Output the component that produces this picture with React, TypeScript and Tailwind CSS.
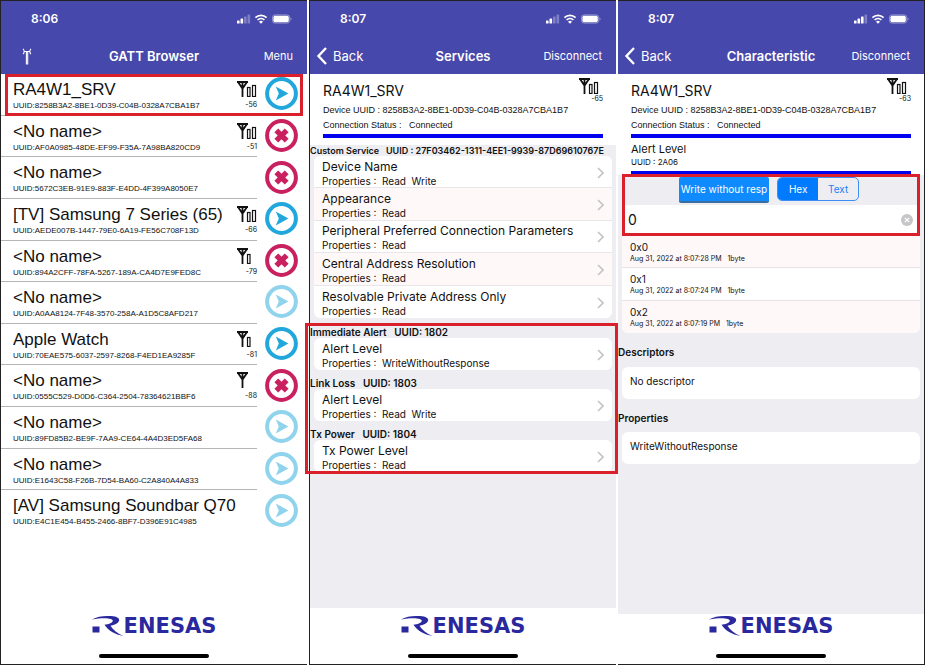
import type { ReactNode } from "react";

type Action = "connect" | "blocked" | "faded";

interface Device {
  name: string;
  uuid: string;
  rssi?: number;
  bars?: number;
  action: Action;
}

const devices: Device[] = [
  { name: "RA4W1_SRV", uuid: "8258B3A2-8BE1-0D39-C04B-0328A7CBA1B7", rssi: -56, bars: 2, action: "connect" },
  { name: "<No name>", uuid: "AF0A0985-48DE-EF99-F35A-7A98BA820CD9", rssi: -51, bars: 2, action: "blocked" },
  { name: "<No name>", uuid: "5672C3EB-91E9-883F-E4DD-4F399A8050E7", action: "blocked" },
  { name: "[TV] Samsung 7 Series (65)", uuid: "AEDE007B-1447-79E0-6A19-FE56C708F13D", rssi: -66, bars: 2, action: "connect" },
  { name: "<No name>", uuid: "894A2CFF-78FA-5267-189A-CA4D7E9FED8C", rssi: -79, bars: 1, action: "blocked" },
  { name: "<No name>", uuid: "A0AA8124-7F48-3570-258A-A1D5C8AFD217", action: "faded" },
  { name: "Apple Watch", uuid: "70EAE575-6037-2597-8268-F4ED1EA9285F", rssi: -81, bars: 1, action: "connect" },
  { name: "<No name>", uuid: "0555C529-D0D6-C364-2504-78364621BBF6", rssi: -88, bars: 0, action: "blocked" },
  { name: "<No name>", uuid: "89FD85B2-BE9F-7AA9-CE64-4A4D3ED5FA68", action: "faded" },
  { name: "<No name>", uuid: "E1643C58-F26B-7D54-BA60-C2A840A4A833", action: "faded" },
  { name: "[AV] Samsung Soundbar Q70", uuid: "E4C1E454-B455-2466-8BF7-D396E91C4985", action: "faded" },
];

const customService = [
  { name: "Device Name", properties: ["Read", "Write"] },
  { name: "Appearance", properties: ["Read"] },
  { name: "Peripheral Preferred Connection Parameters", properties: ["Read"] },
  { name: "Central Address Resolution", properties: ["Read"] },
  { name: "Resolvable Private Address Only", properties: ["Read"] },
];

const alertServices = [
  { service: "Immediate Alert", uuid: "1802", name: "Alert Level", properties: ["WriteWithoutResponse"] },
  { service: "Link Loss", uuid: "1803", name: "Alert Level", properties: ["Read", "Write"] },
  { service: "Tx Power", uuid: "1804", name: "Tx Power Level", properties: ["Read"] },
];

const writes = [
  { value: "0x0", time: "Aug 31, 2022 at 8:07:28 PM" },
  { value: "0x1", time: "Aug 31, 2022 at 8:07:24 PM" },
  { value: "0x2", time: "Aug 31, 2022 at 8:07:19 PM" },
];

function StatusIcons({ strength }: { strength: number }) {
  return (
    <svg width="56" height="12" viewBox="0 0 56 12" fill="#fff" aria-hidden="true">
      {[3, 5, 7, 9].map((h, i) => (
        <rect key={h} x={i * 3.5} y={10.5 - h} width="2.6" height={h} rx="0.6" opacity={i < strength ? 1 : 0.3} />
      ))}
      <g fill="none" stroke="#fff" strokeWidth="1.7">
        <path d="M18.4 4.7a8 8 0 0 1 11.2 0" />
        <path d="M20.6 7a4.9 4.9 0 0 1 6.8 0" />
      </g>
      <path d="M24 10.8l-2-2.1a2.9 2.9 0 0 1 4 0z" />
      <rect x="35.5" y="1.9" width="17.2" height="8.2" rx="2.5" fill="none" stroke="#fff" strokeOpacity="0.5" strokeWidth="0.8" />
      <rect x="36.4" y="2.8" width="15.4" height="6.4" rx="1.6" />
      <path d="M53.6 4.5c1.2.5 1.2 2.5 0 3z" opacity="0.5" />
    </svg>
  );
}

function Signal({ bars }: { bars: number }) {
  return (
    <svg width="20" height="16" viewBox="0 0 20 16" fill="none" stroke="#111" aria-hidden="true">
      <path d="M0 1h11M1.2 1.2l4.3 6.400 4.3-6.400M5.5 1v15" strokeWidth="1.8" />
      {bars > 0 && <rect x="10.5" y="6.500" width="2.5" height="9" strokeWidth="1.200" />}
      {bars > 1 && <rect x="15.500" y="4.5" width="3" height="11" strokeWidth="1.200" />}
    </svg>
  );
}

function ActionIcon({ action }: { action: Action }) {
  if (action === "blocked") {
    return (
      <svg width="33" height="33" viewBox="0 0 33 33" aria-hidden="true">
        <circle cx="16.5" cy="16.5" r="14.4" fill="none" stroke="#c9205f" strokeWidth="4" />
        <path d="M11.3 11.3l10.4 10.4M21.7 11.3L11.3 21.7" stroke="#c9205f" strokeWidth="5.4" />
      </svg>
    );
  }
  const color = action === "connect" ? "#22a7dc" : "#8fd3ed";
  return (
    <svg width="33" height="33" viewBox="0 0 33 33" aria-hidden="true">
      <circle cx="16.5" cy="16.5" r="14.4" fill="none" stroke={color} strokeWidth="4" />
      <path d="M10.8 9.6L23.4 16.5 10.8 23.4l3-6.9z" fill={color} />
    </svg>
  );
}

function Antenna() {
  return (
    <svg width="10" height="17" viewBox="0 0 10 17" fill="none" stroke="#fff" strokeWidth="1.1" aria-hidden="true">
      <path d="M1 .8C2.600 2.200 2.600 4.800 1 6.200M9 .8C7.400 2.200 7.400 4.800 9 6.200M2.500 3.500h5M4.400 3.500V16.500M5.700 3.500V16.500" />
    </svg>
  );
}

function Chevron() {
  return (
    <svg width="7" height="12" viewBox="0 0 7 12" fill="none" stroke="#c3c3c7" strokeWidth="1.6" aria-hidden="true">
      <path d="M1 1l5 5-5 5" />
    </svg>
  );
}

function Header({ time, strength, title, left, right }: { time: string; strength: number; title: string; left: ReactNode; right: string }) {
  return (
    <header className="h-[73px] shrink-0 bg-[#4748ab] text-white">
      <div className="flex items-center justify-between pt-2.5 pl-[30px] pr-3.5">
        <span className="text-xs leading-4 font-semibold">{time}</span>
        <StatusIcons strength={strength} />
      </div>
      <div className="mt-[17px] grid grid-cols-[1fr_auto_1fr] items-center px-1.5 leading-6">
        <div className="flex">{left}</div>
        <h1 className="text-[13px] leading-6 font-semibold">{title}</h1>
        <button type="button" className="justify-self-end pr-2 text-[11px] leading-6">{right}</button>
      </div>
    </header>
  );
}

function BackButton() {
  return (
    <button type="button" className="flex items-center gap-1.5 text-[13px] leading-6">
      <svg width="11" height="18" viewBox="0 0 11 18" fill="none" stroke="#fff" strokeWidth="2.4" aria-hidden="true">
        <path d="M10 1L2.500 9 10 17" />
      </svg>
      Back
    </button>
  );
}

function Footer() {
  return (
    <footer className="flex h-[50px] shrink-0 flex-col items-center justify-between bg-white pt-px pb-1.5">
      <div className="flex items-center text-[#2a289d]">
        <svg width="32" height="22" viewBox="0 0 32 22" fill="currentColor" aria-label="R" role="img">
          <path d="M0 4.500C5 1.200 12 .600 19 1c6 .400 9 2.300 8 5-1 2.500-4.500 4.100-8.500 4.700 2.500 4 7 7.800 13 10.300C23 19.700 16 15.500 12.500 9.800c4-.200 7.500-1.600 8.300-3.700C21.800 3.300 12 2.200 0 4.500z" />
          <rect x="0.500" y="11.500" width="7" height="6" />
        </svg>
        <span className="font-['DejaVu_Sans'] text-[21px] leading-5 font-bold">ENESAS</span>
      </div>
      <div className="h-1 w-[110px] rounded-full bg-black" />
    </footer>
  );
}

function DeviceInfo({ rssi }: { rssi: number }) {
  return (
    <div className="shrink-0 bg-white px-[13px]">
      <div className="flex justify-between pt-1">
        <h2 className="pt-[3px] text-sm leading-5">RA4W1_SRV</h2>
        <div className="flex flex-col items-end">
          <div className="pr-1">
            <Signal bars={2} />
          </div>
          <span className="pt-px text-[7px] leading-2">{rssi}</span>
        </div>
      </div>
      <p className="font-['Liberation_Sans',sans-serif] text-[9px] leading-[15px] whitespace-pre">Device UUID : 8258B3A2-8BE1-0D39-C04B-0328A7CBA1B7</p>
      <p className="font-['Liberation_Sans',sans-serif] text-[9px] leading-[15px] whitespace-pre">Connection Status :   Connected</p>
      <div className="mt-px h-1 bg-[#0000f0]" />
    </div>
  );
}

function CharacteristicRow({ name, properties }: { name: string; properties: string[] }) {
  return (
    <li className="border-b border-[#e9e6ea] last:border-b-0 even:bg-[#fff8f8]">
      <button type="button" className="flex h-full w-full items-center justify-between px-2 pt-0.5 text-left">
        <span>
          <span className="block text-xs leading-4 whitespace-nowrap">{name}</span>
          <span className="block text-[10px] leading-3 whitespace-pre">{"Properties :  " + properties.join("  ")}</span>
        </span>
        <Chevron />
      </button>
    </li>
  );
}

/* Red frame that calls out the region it is placed in */
function Callout({ className }: { className: string }) {
  return <div className={"pointer-events-none absolute z-10 border-3 border-[#d9202b] " + className} />;
}

function BrowserScreen() {
  return (
    <section className="flex min-w-0 flex-1 flex-col border-t border-b border-l border-[#222] bg-white">
      <Header
        time="8:06"
        strength={2}
        title="GATT Browser"
        right="Menu"
        left={<button type="button" aria-label="Scan" className="pl-[15px]"><Antenna /></button>}
      />
      <ul className="grid h-[458px] auto-rows-fr grid-cols-1">
        {devices.map((d) => (
          <li key={d.uuid} className="group relative flex min-w-0">
            <div className="flex min-w-0 flex-1 border-b border-[#b5b5b5] pl-3 group-last:border-b-0">
              <div className="min-w-0 flex-1 overflow-hidden pt-1.5 font-['Liberation_Sans',sans-serif] whitespace-nowrap">
                <p className="text-[17px] leading-5">{d.name}</p>
                <p className="text-[8px] leading-3">UUID:{d.uuid}</p>
              </div>
              <div className="flex w-5 flex-col items-end pt-[7px]">
                {d.bars !== undefined && (
                  <>
                    <Signal bars={d.bars} />
                    <span className="pt-1 text-[7px] leading-2">{d.rssi}</span>
                  </>
                )}
              </div>
            </div>
            <button type="button" aria-label={"Open " + d.name} className="pr-[9px] pb-0.5 pl-2">
              <ActionIcon action={d.action} />
            </button>
            {d.name === "RA4W1_SRV" && <Callout className="inset-x-1 inset-y-0" />}
          </li>
        ))}
      </ul>
      <div className="flex-1" />
      <Footer />
    </section>
  );
}

function ServicesScreen() {
  return (
    <section className="flex min-w-0 flex-1 flex-col border-t border-b border-l border-[#222] bg-[#eeedf2]">
      <Header time="8:07" strength={2} title="Services" right="Disconnect" left={<BackButton />} />
      <div className="bg-white pb-[7px]">
        <DeviceInfo rssi={-65} />
      </div>
      <h3 className="text-[9px] leading-[11px] font-semibold whitespace-pre">Custom Service   UUID : 27F03462-1311-4EE1-9939-87D69610767E</h3>
      <ul className="mx-1 grid h-[162px] auto-rows-fr overflow-hidden rounded-md bg-white">
        {customService.map((c) => (
          <CharacteristicRow key={c.name} name={c.name} properties={c.properties} />
        ))}
      </ul>
      <div className="relative pt-px">
        <Callout className="-right-0.5 -bottom-0.5 -left-[5px] top-[5px]" />
        {alertServices.map((s) => (
          <div key={s.uuid} className="pt-[7px]">
            <h3 className="text-[10px] leading-3 font-semibold whitespace-pre">{s.service + "   UUID: " + s.uuid}</h3>
            <ul className="mx-1 grid h-8 overflow-hidden rounded-md bg-white">
              <CharacteristicRow name={s.name} properties={s.properties} />
            </ul>
          </div>
        ))}
      </div>
      <div className="flex-1" />
      <div className="bg-white pt-1.5">
        <Footer />
      </div>
    </section>
  );
}

function CharacteristicScreen() {
  return (
    <section className="flex min-w-0 flex-1 flex-col border-t border-r border-b border-[#222] bg-[#eeedf2]">
      <Header time="8:07" strength={3} title="Characteristic" right="Disconnect" left={<BackButton />} />
      <DeviceInfo rssi={-63} />
      <div className="bg-white px-[13px] pt-1">
        <h2 className="text-[11px] leading-[14px]">Alert Level</h2>
        <p className="text-[8px] leading-3">UUID : 2A06</p>
        <div className="mt-[3px] h-1 bg-[#0000f0]" />
      </div>
      <div className="relative">
        <Callout className="inset-x-1 -top-px -bottom-px" />
        <div className="flex h-[30px] justify-center gap-2 pt-0.5 pr-1">
          <button type="button" className="h-[26px] rounded-xs border-b-2 border-[#3a6f9f] bg-[#0f8bff] px-0.5 text-[10px] whitespace-nowrap text-white">
            Write without resp
          </button>
          <div className="grid h-6 w-[82px] grid-cols-2 overflow-hidden rounded-[5px] border border-[#3d8ff5] text-[10px]">
            <button type="button" aria-pressed="true" className="bg-[#007aff] text-white">Hex</button>
            <button type="button" aria-pressed="false" className="text-[#2080f8]">Text</button>
          </div>
        </div>
        <div className="mx-1 flex h-[30px] items-center bg-white pr-[7px] pl-1.5">
          <input type="text" aria-label="Value" defaultValue="0" className="min-w-0 flex-1 text-sm outline-none" />
          <button type="button" aria-label="Clear">
            <svg width="12" height="12" viewBox="0 0 12 12" aria-hidden="true">
              <circle cx="6" cy="6" r="6" fill="#c6c6c8" />
              <path d="M3.800 3.800l4.400 4.400M8.200 3.800L3.800 8.200" stroke="#fff" strokeWidth="1.200" />
            </svg>
          </button>
        </div>
      </div>
      <ul className="mx-1 mt-px grid h-[97px] auto-rows-fr overflow-hidden rounded-b-md bg-white">
        {writes.map((w) => (
          <li key={w.value} className="border-b border-[#e6e3e6] pt-[5px] pl-2 last:border-b-0 odd:bg-[#fff8f8]">
            <p className="text-[10px] leading-[13px]">{w.value}</p>
            <p className="text-[7px] leading-[10px] whitespace-pre">{w.time + "   1byte"}</p>
          </li>
        ))}
      </ul>
      <h3 className="pt-3.5 pb-2.5 text-[10px] leading-[10px] font-semibold">Descriptors</h3>
      <p className="mx-1 h-8 rounded-md bg-white pt-1.5 pl-2 text-[10px] leading-4">No descriptor</p>
      <h3 className="pt-3.5 pb-[9px] text-[10px] leading-[10px] font-semibold">Properties</h3>
      <p className="mx-1 h-8 rounded-md bg-white pt-1.5 pl-2 text-[10px] leading-4">WriteWithoutResponse</p>
      <div className="flex-1" />
      <Footer />
    </section>
  );
}

export default function App() {
  return (
    <main className="flex min-h-screen gap-0.5 bg-white pr-1.5 pb-1.5 font-[Inter,sans-serif] text-[#111]">
      <BrowserScreen />
      <ServicesScreen />
      <CharacteristicScreen />
    </main>
  );
}
